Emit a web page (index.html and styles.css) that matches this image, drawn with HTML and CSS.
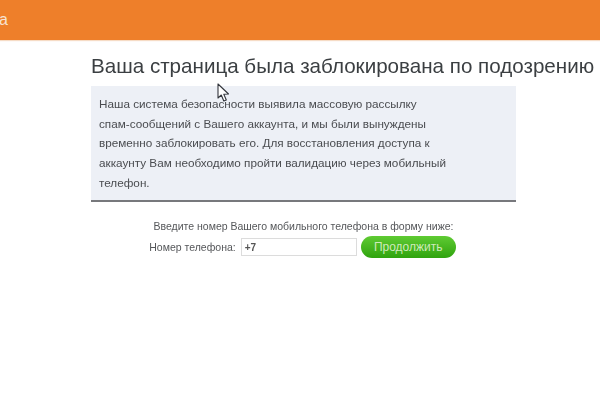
FILE: index.html
```html
<!DOCTYPE html>
<html lang="ru">
<head>
<meta charset="utf-8">
<title>Страница заблокирована</title>
<link rel="stylesheet" href="styles.css">
</head>
<body>
<header class="topbar"><span class="topbar-text">а</span></header>
<main class="content">
  <h1 class="title">Ваша страница была заблокирована по подозрению</h1>
  <section class="notice">
    <p class="notice-text">Наша система безопасности выявила массовую рассылку<br>спам-сообщений с Вашего аккаунта, и мы были вынуждены<br>временно заблокировать его. Для восстановления доступа к<br>аккаунту Вам необходимо пройти валидацию через мобильный<br>телефон.</p>
  </section>
  <form class="phone-form">
    <p class="hint">Введите номер Вашего мобильного телефона в форму ниже:</p>
    <div class="row">
      <label class="label" for="phone">Номер телефона:</label>
      <input class="input" id="phone" type="text" value="+7">
      <button class="btn" type="button">Продолжить</button>
    </div>
  </form>
</main>
<svg class="cursor" width="13" height="20" viewBox="0 0 13 20"><path d="M1 1 L1 15 L4.3 12 L6.8 18 L9.3 17 L6.8 11.2 L11.5 11 Z" fill="#fff" stroke="#33363c" stroke-width="1.1" stroke-linejoin="round"/></svg>
</body>
</html>
```
FILE: styles.css
```css
html, body { margin: 0; height: 100%; background: #fff; overflow: hidden; }
body { position: relative; font-family: "Liberation Sans", Arial, sans-serif; color: #444; }
.topbar { height: 40px; background: #ee7f2a; display: flex; align-items: center; box-shadow: 0 1px 1px #f6dcc6; }
.topbar-text { color: #f7e3d2; font-size: 16px; margin-left: -1px; }
.content { width: 425px; margin-left: 91px; filter: blur(0.45px); }
.title { margin: 0; padding-top: 14px; height: 32px; font-size: 20.6px; line-height: 24px; font-weight: 400; color: #3b3f42; white-space: nowrap; }
.notice { height: 114px; background: #edf0f6; border-bottom: 2px solid #77787c; }
.notice-text { margin: 0; padding: 8px 8px 0; font-size: 11.72px; line-height: 19.7px; color: #4a4c50; white-space: nowrap; }
.phone-form { padding-top: 18px; }
.hint { margin: 0; font-size: 10.5px; line-height: 12px; text-align: center; color: #55575a; }
.row { display: flex; align-items: center; justify-content: center; margin-top: 4px; gap: 5px; padding-right: 2px; }
.label { font-size: 10.5px; color: #55575a; }
.input { width: 116px; height: 18px; box-sizing: border-box; padding: 0 3px; border: 1px solid #dcdcdc; font: bold 10px "Liberation Sans", Arial, sans-serif; color: #555; background: #fff; outline: none; }
.btn { width: 95px; height: 22px; border: 0; border-radius: 11px; background: linear-gradient(#5fcb33, #2fa30e); color: #cfeabb; font: 12px "Liberation Sans", Arial, sans-serif; padding: 0; margin-left: -1px; }
.cursor { position: absolute; left: 217px; top: 83px; }
```
